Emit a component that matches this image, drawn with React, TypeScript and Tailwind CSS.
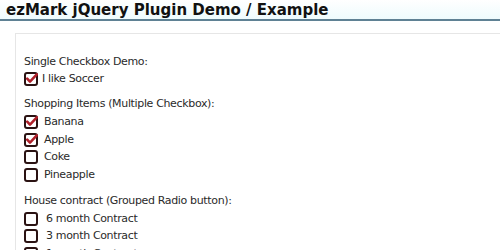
import React from "react";

function Box({ checked }: { checked: boolean }) {
  return (
    <svg width="14" height="14" viewBox="0 0 14 14" className="shrink-0">
      <rect x="1" y="1" width="12" height="12" rx="2" fill="#fff" stroke="#2a1212" strokeWidth="2" />
      {checked && (
        <path d="M3.2 6.6 L6 9.6 L12.8 2.4" fill="none" stroke="#b0202a" strokeWidth="2.6" strokeLinecap="round" strokeLinejoin="round" />
      )}
    </svg>
  );
}

function Item({ label, checked = false, gap = "gap-[6px]" }: { label: string; checked?: boolean; gap?: string }) {
  return (
    <div className={`flex h-[17.5px] items-center ${gap}`}>
      <Box checked={checked} />
      <span>{label}</span>
    </div>
  );
}

export default function App() {
  return (
    <div className="h-[250px] w-[500px] overflow-hidden bg-white text-[#2a2a2a]" style={{ fontFamily: "Verdana, 'DejaVu Sans', sans-serif" }}>
      <h1 className="border-b-2 border-[#5f8194] bg-gradient-to-b from-white to-[#eefbfd] pl-[6px] pt-[2px] text-[15px] font-bold leading-[17px] text-[#111]">
        ezMark jQuery Plugin Demo / Example
      </h1>
      <div className="ml-[15px] mt-[12px] border-l border-t border-[#e6e6e6] pl-[8px] pt-[19px] text-[11px] tracking-[-0.35px]">
        <div className="flex h-[17.5px] items-center">Single Checkbox Demo:</div>
        <Item label="I like Soccer" checked gap="gap-[4px]" />
        <div className="mt-[7px] flex h-[18.5px] items-center">Shopping Items (Multiple Checkbox):</div>
        <Item label="Banana" checked />
        <Item label="Apple" checked />
        <Item label="Coke" />
        <Item label="Pineapple" />
        <div className="mt-[9px] flex h-[17.5px] items-center">House contract (Grouped Radio button):</div>
        <Item label="6 month Contract" gap="gap-[8px]" />
        <Item label="3 month Contract" gap="gap-[8px]" />
        <Item label="1 month Contract" gap="gap-[8px]" />
      </div>
    </div>
  );
}
